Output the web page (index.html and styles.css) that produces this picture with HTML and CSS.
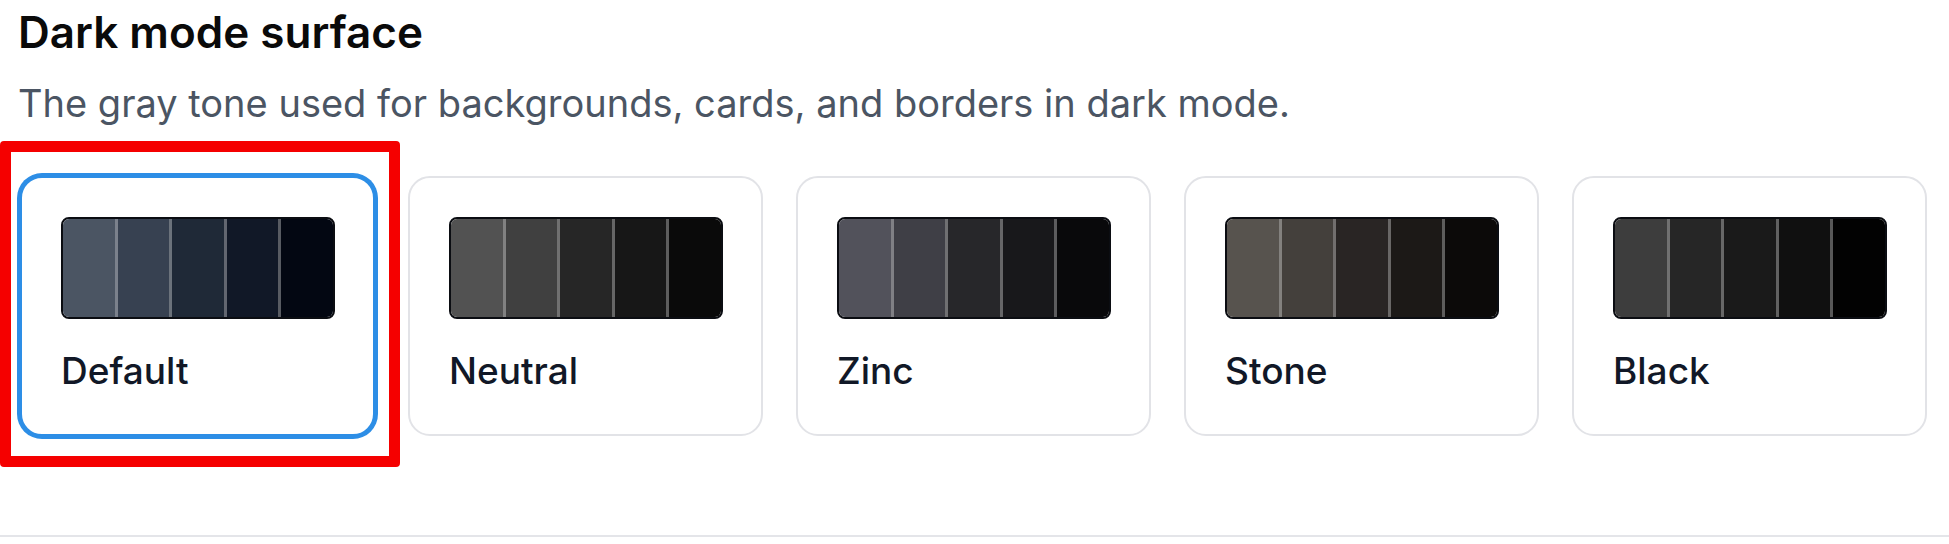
FILE: index.html
```html
<!DOCTYPE html>
<html lang="en">
<head>
    <meta charset="UTF-8">
    <meta name="viewport" content="width=device-width, initial-scale=1.0">
    <title>Appearance</title>
    <link rel="stylesheet" href="styles.css">
</head>
<body>
    <section class="setting">
        <h2>Dark mode surface</h2>
        <p class="hint">The gray tone used for backgrounds, cards, and borders in dark mode.</p>

        <div class="options">
            <button class="option selected">
                <span class="swatch">
                    <span style="background:#4b5563"></span>
                    <span style="background:#374151"></span>
                    <span style="background:#1f2937"></span>
                    <span style="background:#111827"></span>
                    <span style="background:#030712"></span>
                </span>
                <span class="name">Default</span>
            </button>
            <button class="option">
                <span class="swatch">
                    <span style="background:#525252"></span>
                    <span style="background:#404040"></span>
                    <span style="background:#262626"></span>
                    <span style="background:#171717"></span>
                    <span style="background:#0a0a0a"></span>
                </span>
                <span class="name">Neutral</span>
            </button>
            <button class="option">
                <span class="swatch">
                    <span style="background:#52525b"></span>
                    <span style="background:#3f3f46"></span>
                    <span style="background:#27272a"></span>
                    <span style="background:#18181b"></span>
                    <span style="background:#09090b"></span>
                </span>
                <span class="name">Zinc</span>
            </button>
            <button class="option">
                <span class="swatch">
                    <span style="background:#57534e"></span>
                    <span style="background:#44403c"></span>
                    <span style="background:#292524"></span>
                    <span style="background:#1c1917"></span>
                    <span style="background:#0c0a09"></span>
                </span>
                <span class="name">Stone</span>
            </button>
            <button class="option">
                <span class="swatch">
                    <span style="background:#3d3d3d"></span>
                    <span style="background:#262626"></span>
                    <span style="background:#1a1a1a"></span>
                    <span style="background:#101010"></span>
                    <span style="background:#020202"></span>
                </span>
                <span class="name">Black</span>
            </button>
        </div>
    </section>
</body>
</html>
```

FILE: styles.css
```css
body {
    margin: 0;
    background-color: #ffffff;
    font-family: Inter, "Noto Sans", sans-serif;
    color: #0a0a0a;
}
.setting {
    padding: 6px 22px 99px 20px;
    border-bottom: 2px solid #e4e5e9;
}
h2 {
    margin: 0 0 0 -2px;
    font-size: 44px;
    line-height: 52px;
    font-weight: 600;
}
.hint {
    margin: 22px 0 0 -2px;
    font-size: 38px;
    line-height: 46px;
    color: #4b5563;
}
.options {
    display: grid;
    grid-template-columns: repeat(5, minmax(0, 1fr));
    gap: 33px;
    margin-top: 50px;
}
.option {
    position: relative;
    display: flex;
    flex-direction: column;
    align-items: flex-start;
    height: 260px;
    padding: 39px 38px 0 39px;
    background: #ffffff;
    border: 2px solid #e2e3e7;
    border-radius: 22px;
    font-family: inherit;
    cursor: pointer;
}
.option.selected {
    border-color: #2d8ee6;
    box-shadow: 0 0 0 3px #2d8ee6;
}
/* red marker round the active choice */
.option.selected::after {
    content: "";
    position: absolute;
    top: -37px;
    left: -22px;
    right: -27px;
    bottom: -33px;
    border: 11px solid #f50000;
    border-radius: 4px;
}
.swatch {
    display: flex;
    width: 274px;
    height: 102px;
    border: 2px solid #0b0d12;
    border-radius: 8px;
    overflow: hidden;
    box-sizing: border-box;
}
.swatch span {
    flex: 1;
}
.swatch span + span {
    border-left: 3px solid rgba(255, 255, 255, 0.34);
}
.name {
    margin-top: 29px;
    font-size: 37px;
    line-height: 45px;
    font-weight: 500;
    color: #111827;
}
```
